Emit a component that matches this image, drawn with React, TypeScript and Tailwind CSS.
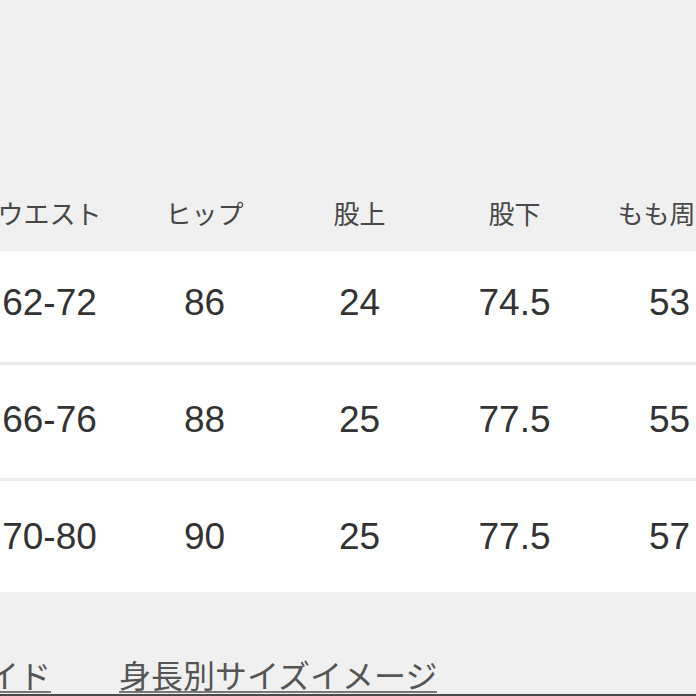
const headers = ["ウエスト", "ヒップ", "股上", "股下", "もも周り"];

const rows = [
  { values: ["62-72", "86", "24", "74.5", "53"], box: "h-[111px] pt-[32px]" },
  { values: ["66-76", "88", "25", "77.5", "55"], box: "h-[113px] pt-[35px]" },
  { values: ["70-80", "90", "25", "77.5", "57"], box: "h-[111px] pt-[36px]" },
];

const jp = { fontFamily: '"Noto Sans CJK JP", "Noto Sans", sans-serif' };
const num = { fontFamily: '"Liberation Sans", Arial, sans-serif' };

export default function App() {
  return (
    <div className="flex h-[696px] w-[696px] flex-col overflow-hidden bg-[#f0f0f0]">
      <div className="h-[251px] pt-[196px]">
        <div className="ml-[-28px] grid w-[775px] grid-cols-[repeat(5,155px)]">
          {headers.map((h) => (
            <div
              key={h}
              style={jp}
              className="whitespace-nowrap text-center text-[26px] leading-[34px] text-[#474747]"
            >
              {h}
            </div>
          ))}
        </div>
      </div>

      {rows.map((row, i) => (
        <div key={i}>
          {i > 0 && <div className="h-[3px] bg-[#ececec]" />}
          <div className={`bg-white ${row.box}`}>
            <div className="ml-[-28px] grid w-[775px] grid-cols-[repeat(5,155px)]">
              {row.values.map((v, j) => (
                <div
                  key={j}
                  style={num}
                  className="text-center text-[37px] leading-[40px] text-[#333333]"
                >
                  {v}
                </div>
              ))}
            </div>
          </div>
        </div>
      ))}

      <div className="flex flex-1 flex-col justify-end">
        <div className="ml-[-140px] flex gap-[68px] text-[32px] leading-[34px] text-[#555555]" style={jp}>
          <span className="whitespace-nowrap border-b-2 border-[#777777]">サイズガイド</span>
          <span className="whitespace-nowrap border-b-2 border-[#777777]">身長別サイズイメージ</span>
        </div>
        <div className="mt-px h-[2px] bg-[#4a4a4a]" />
      </div>
    </div>
  );
}
